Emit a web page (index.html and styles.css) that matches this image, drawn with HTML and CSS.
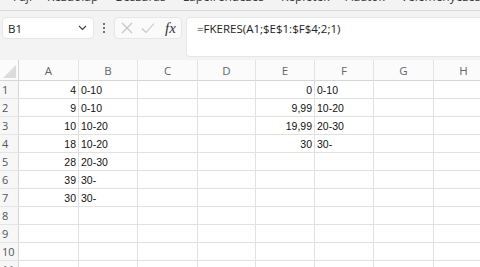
FILE: index.html
```html
<!DOCTYPE html>
<html lang="hu">
<head>
<meta charset="utf-8">
<title>Excel</title>
<link rel="stylesheet" href="styles.css">
</head>
<body>
<div class="ribbon">
  <span class="tab t1">Fájl</span>
  <span class="tab t2">Kezdőlap</span>
  <span class="tab t3">Beszúrás</span>
  <span class="tab t4">Lapelrendezés</span>
  <span class="tab t5">Képletek</span>
  <span class="tab t6">Adatok</span>
  <span class="tab t7">Véleményezés</span>
</div>
<div class="fbar">
  <div class="namebox">
    <span class="name">B1</span>
    <svg class="chev" width="9" height="6" viewBox="0 0 9 6"><path d="M1 1 L4.5 4.5 L8 1" fill="none" stroke="#444" stroke-width="1.2"/></svg>
  </div>
  <div class="dots"><i></i><i></i><i></i></div>
  <div class="btns">
    <svg width="12" height="12" viewBox="0 0 12 12"><path d="M1 1 L11 11 M11 1 L1 11" stroke="#c4c4c4" stroke-width="1.1"/></svg>
    <svg width="14" height="12" viewBox="0 0 14 12"><path d="M1 6.5 L5 10.5 L13 1.5" fill="none" stroke="#c4c4c4" stroke-width="1.1"/></svg>
    <span class="fx">fx</span>
  </div>
  <div class="formula">=FKERES(A1;$E$1:$F$4;2;1)</div>
</div>
<div class="sheet">
  <div class="corner"><span class="tri"></span></div>
  <div class="ch">A</div><div class="ch">B</div><div class="ch">C</div><div class="ch">D</div><div class="ch">E</div><div class="ch">F</div><div class="ch">G</div><div class="ch">H</div><div class="ch last"></div>

  <div class="rh">1</div><div class="c n">4</div><div class="c">0-10</div><div class="c"></div><div class="c"></div><div class="c n">0</div><div class="c">0-10</div><div class="c"></div><div class="c"></div><div class="c"></div>
  <div class="rh">2</div><div class="c n">9</div><div class="c">0-10</div><div class="c"></div><div class="c"></div><div class="c n">9,99</div><div class="c">10-20</div><div class="c"></div><div class="c"></div><div class="c"></div>
  <div class="rh">3</div><div class="c n">10</div><div class="c">10-20</div><div class="c"></div><div class="c"></div><div class="c n">19,99</div><div class="c">20-30</div><div class="c"></div><div class="c"></div><div class="c"></div>
  <div class="rh">4</div><div class="c n">18</div><div class="c">10-20</div><div class="c"></div><div class="c"></div><div class="c n">30</div><div class="c">30-</div><div class="c"></div><div class="c"></div><div class="c"></div>
  <div class="rh">5</div><div class="c n">28</div><div class="c">20-30</div><div class="c"></div><div class="c"></div><div class="c"></div><div class="c"></div><div class="c"></div><div class="c"></div><div class="c"></div>
  <div class="rh">6</div><div class="c n">39</div><div class="c">30-</div><div class="c"></div><div class="c"></div><div class="c"></div><div class="c"></div><div class="c"></div><div class="c"></div><div class="c"></div>
  <div class="rh">7</div><div class="c n">30</div><div class="c">30-</div><div class="c"></div><div class="c"></div><div class="c"></div><div class="c"></div><div class="c"></div><div class="c"></div><div class="c"></div>
  <div class="rh">8</div><div class="c"></div><div class="c"></div><div class="c"></div><div class="c"></div><div class="c"></div><div class="c"></div><div class="c"></div><div class="c"></div><div class="c"></div>
  <div class="rh">9</div><div class="c"></div><div class="c"></div><div class="c"></div><div class="c"></div><div class="c"></div><div class="c"></div><div class="c"></div><div class="c"></div><div class="c"></div>
  <div class="rh">10</div><div class="c"></div><div class="c"></div><div class="c"></div><div class="c"></div><div class="c"></div><div class="c"></div><div class="c"></div><div class="c"></div><div class="c"></div>
  <div class="rh">11</div><div class="c"></div><div class="c"></div><div class="c"></div><div class="c"></div><div class="c"></div><div class="c"></div><div class="c"></div><div class="c"></div><div class="c"></div>
</div>
</body>
</html>
```
FILE: styles.css
```css
* { box-sizing: border-box; }
html, body { margin: 0; padding: 0; }
body {
  width: 480px;
  height: 267px;
  overflow: hidden;
  background: #ffffff;
  font-family: "Open Sans", "Noto Sans", sans-serif;
}
.ribbon {
  height: 11px;
  background: #f3f3f3;
  border-bottom: 1px solid #d9d9d9;
  overflow: hidden;
  display: flex;
  white-space: nowrap;
}
.tab {
  font-size: 12px;
  line-height: 14px;
  margin-top: -10px;
  color: #3a3a3a;
  flex: none;
}
.t1 { margin-left: 13px; }
.t2 { margin-left: 15px; }
.t3 { margin-left: 17px; }
.t4 { margin-left: 17px; }
.t5 { margin-left: 17px; }
.t6 { margin-left: 16px; }
.t7 { margin-left: 16px; }

.fbar {
  height: 49px;
  background: #f3f3f3;
  display: flex;
  align-items: flex-start;
  padding: 6px 0 0 2px;
}
.namebox {
  width: 92px;
  height: 22px;
  background: #fff;
  border: 1px solid #e6e6e6;
  border-radius: 4px;
  display: flex;
  align-items: center;
  justify-content: space-between;
  padding: 0 6px 0 5px;
}
.name { font-size: 11.5px; color: #222; }
.chev { display: block; }
.dots {
  width: 20px;
  height: 22px;
  display: flex;
  flex-direction: column;
  align-items: center;
  justify-content: center;
  gap: 2px;
}
.dots i {
  display: block;
  width: 2px;
  height: 2px;
  background: #444;
  border-radius: 1px;
}
.btns {
  width: 68px;
  height: 22px;
  background: #fafafa;
  border: 1px solid #e6e6e6;
  border-radius: 4px;
  display: flex;
  align-items: center;
  padding: 0 0 0 6px;
  gap: 8px;
}
.btns svg { display: block; flex: none; }
.fx {
  font-family: "Liberation Serif", "DejaVu Serif", serif;
  font-style: italic;
  font-size: 15px;
  color: #333;
  margin-left: 2px;
}
.formula {
  flex: 1;
  margin-left: 4px;
  height: 40px;
  background: #fff;
  border: 1px solid #e6e6e6;
  border-right: none;
  border-radius: 4px 0 0 4px;
  font-size: 11.5px;
  color: #222;
  padding: 3px 0 0 10px;
  line-height: 16px;
}

.sheet {
  display: grid;
  grid-template-columns: 19px 60px 59px 60px 58px 59px 59px 60px 60px 1fr;
  grid-template-rows: 21px repeat(11, 18px);
  font-family: "Liberation Sans", Arial, sans-serif;
}
.corner {
  background: #fbfbfb;
  border-right: 1px solid #d6d6d6;
  border-bottom: 1px solid #d6d6d6;
  position: relative;
}
.tri {
  position: absolute;
  right: 2px;
  bottom: 2px;
  width: 13px;
  height: 13px;
  background: #dcdcdc;
  clip-path: polygon(100% 0, 100% 100%, 0 100%);
}
.ch {
  background: #fbfbfb;
  border-right: 1px solid #e4e4e4;
  border-bottom: 1px solid #d6d6d6;
  font-family: "Open Sans", "Noto Sans", sans-serif;
  font-size: 11.5px;
  color: #666;
  display: flex;
  align-items: center;
  justify-content: center;
  padding-top: 1px;
}
.ch.last { border-right: none; }
.rh {
  background: #f7f7f7;
  border-right: 1px solid #d6d6d6;
  border-bottom: 1px solid #e4e4e4;
  font-family: "Open Sans", "Noto Sans", sans-serif;
  font-size: 11px;
  color: #555;
  display: flex;
  align-items: center;
  padding-left: 2px;
}
.c {
  border-right: 1px solid #e1e1e1;
  border-bottom: 1px solid #e1e1e1;
  font-size: 10.5px;
  color: #111;
  display: flex;
  align-items: center;
  padding: 0 2px 0 2px;
  white-space: nowrap;
}
.c.n { justify-content: flex-end; }
```
